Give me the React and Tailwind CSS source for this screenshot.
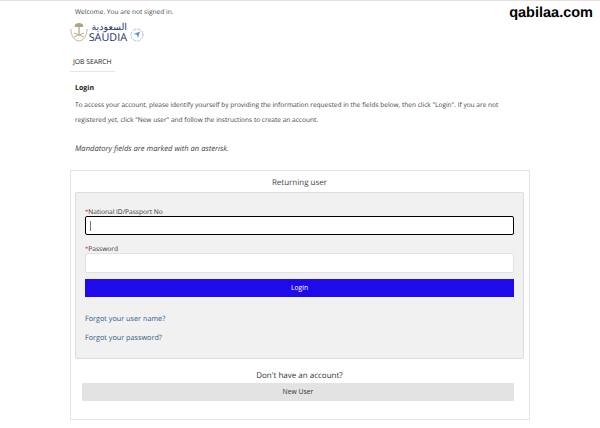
const Field = ({ label, focused }) => (
  <div>
    <label className="block text-[6.600px] leading-[8px] text-[#333]">
      <span className="text-[#e02020] text-[6px]">*</span>
      {label}
    </label>
    {focused ? (
      <div className="h-[19px] rounded-[2px] border-[1.5px] border-black bg-white flex items-center pl-[4px]">
        <span className="w-px h-[10px] bg-[#777]" />
      </div>
    ) : (
      <div className="h-[20px] rounded-[2px] border border-[#e2e2e2] bg-white" />
    )}
  </div>
);

const Logo = () => (
  <div className="flex items-center h-[20px] ml-[-5px]">
    <svg width="18" height="20" viewBox="0 0 18 20" fill="none" stroke="#b3a27c">
      <path d="M9 1C6.500 1 4.500 2.500 4.500 4.500c2 .8 7 .8 9 0C13.500 2.500 11.500 1 9 1z" fill="#b3a27c" stroke="none" />
      <path d="M9 4v8" strokeWidth="1.200" />
      <path d="M4 15l10-4M14 15L4 11" strokeWidth="0.9" />
      <path d="M1 7c-.5 6 3.500 12 8 12s8.500-6 8-12" strokeWidth="0.8" />
    </svg>
    <div className="w-[39px] flex flex-col items-end text-[#23306f]">
      <span className="text-[9.500px] leading-[11px] h-[11px] font-['DejaVu_Sans',sans-serif]" dir="rtl">السعودية</span>
      <span className="text-[10.800px] leading-[9px] h-[9px] font-['Open_Sans',sans-serif]">SAUDIA</span>
    </div>
    <svg width="14" height="15" viewBox="0 0 14 15" fill="none" className="ml-[3px] mt-[5px]">
      <circle cx="7" cy="8" r="6" stroke="#7d9cc9" strokeWidth="0.8" strokeDasharray="1.500 1" />
      <path d="M3.500 7l6.500-2.500-2 6.500-1.200-3.200z" fill="#6f92c4" />
    </svg>
  </div>
);

export default function App() {
  return (
    <div className="relative w-[600px] h-[428px] overflow-hidden bg-white font-['Open_Sans',sans-serif] text-[#444] [text-rendering:geometricPrecision]">
      <div className="h-px bg-[#e8dde0]" />
      <span className="absolute right-[7px] top-[3px] text-[14.500px] leading-[20px] font-bold text-black font-['Liberation_Sans',sans-serif]">qabilaa.com</span>

      <div className="pl-[75px] pr-[95px]">
        <p className="mt-[5px] text-[6.600px] leading-[11px] text-[#444]">Welcome. You are not signed in.</p>
        <div className="mt-[5px]"><Logo /></div>

        <div className="mt-[11px] ml-[-5px] w-[45px] border-b border-[#e6e6e6] h-[19px] pl-[3px] pt-[3px] text-[6.800px] leading-[12px] text-[#222]">JOB SEARCH</div>

        <h1 className="mt-[11px] text-[7px] leading-[11px] font-bold text-[#222]">Login</h1>
        <p className="mt-[3px] text-[6.550px] leading-[15px] text-[#444]">
          To access your account, please identify yourself by providing the information requested in the fields below, then click "Login". If you are not registered yet, click "New user" and follow the instructions to create an account.
        </p>
        <p className="mt-[16px] text-[7.600px] leading-[12px] italic text-[#444]">Mandatory fields are marked with an asterisk.</p>

        <div className="mt-[15px] ml-[-5px] w-[460px] h-[250px] border border-[#e4e4e4] pl-[4px] pr-[5px]">
          <h2 className="text-center text-[8px] leading-[12px] mt-[6px] text-[#444]">Returning user</h2>
          <div className="mt-[3px] h-[167px] rounded-[2px] border border-[#dddddd] bg-[#f1f1f1] px-[9px] pt-[15px]">
            <div className="flex flex-col gap-[10px]">
              <Field label="National ID/Passport No" focused />
              <Field label="Password" />
            </div>
            <button className="mt-[6px] block w-full h-[18px] bg-[#1e0aea] text-white text-[6.800px] leading-[18px]">Login</button>
            <a className="block mt-[17px] text-[7.250px] leading-[11px] text-[#2f5a86]">Forgot your user name?</a>
            <a className="block mt-[8px] text-[7.250px] leading-[11px] text-[#2f5a86]">Forgot your password?</a>
          </div>
          <p className="mt-[11px] text-center text-[8px] leading-[12px] text-[#333]">Don't have an account?</p>
          <button className="mt-[1px] block ml-[7px] w-[432px] h-[18px] rounded-[1px] bg-[#e3e3e3] text-[6.800px] text-[#333]">New User</button>
        </div>
      </div>
    </div>
  );
}
